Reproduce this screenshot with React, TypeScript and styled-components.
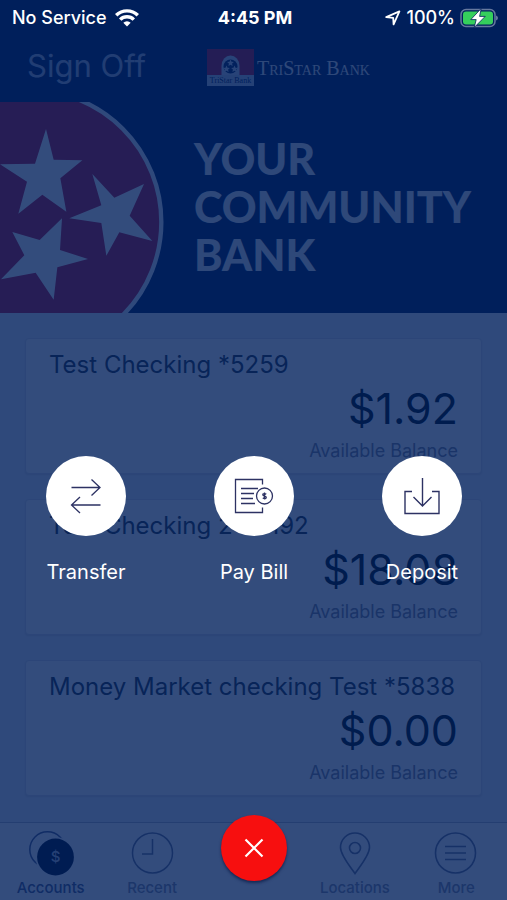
import React from "react";
import styled, { createGlobalStyle } from "styled-components";

const GlobalStyle = createGlobalStyle`
  *, *::before, *::after { box-sizing: border-box; }
  body {
    margin: 0;
    background: #001f5b;
    font-family: Inter, "Liberation Sans", sans-serif;
  }
  button { border: 0; background: none; padding: 0; margin: 0; font: inherit; color: inherit; cursor: pointer; }
  a { color: inherit; text-decoration: none; }
  h1, h2, p { margin: 0; }
  svg { display: block; flex: none; }
`;

const Screen = styled.div`
  position: relative;
  min-height: 100vh;
  display: flex;
  flex-direction: column;
  background: #ebeff8;
  overflow: hidden;
`;

const StatusBar = styled.div`
  position: relative;
  z-index: 2;
  display: grid;
  grid-template-columns: 1fr auto 1fr;
  align-items: center;
  height: 36px;
  padding: 0 9px 0 12px;
  background: #001f5b;
  color: #fff;
  font-size: 18px;
  font-weight: 500;
  line-height: 20px;
`;

const StatusGroup = styled.div<{ $end?: boolean }>`
  display: flex;
  align-items: center;
  gap: ${(p) => (p.$end ? 5 : 8)}px;
  justify-content: ${(p) => (p.$end ? "flex-end" : "flex-start")};
`;

const Clock = styled.time`
  font-weight: 700;
`;

const Header = styled.header`
  display: grid;
  grid-template-columns: 180px 1fr;
  align-items: center;
  height: 66px;
  padding: 0 27px 6px;
  background: #001f5b;
`;

const SignOff = styled.button`
  justify-self: start;
  color: #dfe6f8;
  font-size: 31px;
  line-height: 40px;
  opacity: 0.75;
`;

const Brand = styled.div`
  display: flex;
  align-items: center;
  gap: 3px;
  margin-top: 4px;
`;

const BrandName = styled.span`
  font-family: "Liberation Serif", serif;
  font-variant: small-caps;
  font-size: 20px;
  line-height: 24px;
  white-space: nowrap;
  color: #fff;
  opacity: 0.9;
`;

const Hero = styled.section`
  display: flex;
  align-items: center;
  gap: 25px;
  background: #001f5b;
`;

const Slogan = styled.h1`
  padding-bottom: 2px;
  color: #fff;
  opacity: 0.9;
  font-family: Lato, sans-serif;
  font-weight: 900;
  font-size: 43px;
  line-height: 48px;
`;

const AccountList = styled.main`
  flex: 1;
  display: flex;
  flex-direction: column;
  gap: 25px;
  padding: 25px;
`;

const Card = styled.article`
  display: flex;
  flex-direction: column;
  padding: 10px 23px 6px;
  border-radius: 4px;
  background: #fff;
  border: 1px solid #d9dde8;
  box-shadow: 0 1px 2px rgba(0, 0, 0, 0.1);
`;

const AccountName = styled.h2`
  color: #28384c;
  font-size: 24px;
  font-weight: 400;
  line-height: 32px;
  white-space: nowrap;
`;

const Amount = styled.p`
  align-self: flex-end;
  color: #00101c;
  font-size: 43px;
  line-height: 54px;
`;

const Caption = styled.p`
  align-self: flex-end;
  color: #82879a;
  font-size: 18px;
  line-height: 32px;
`;

const TabBar = styled.nav`
  display: grid;
  grid-template-columns: repeat(5, 1fr);
  height: 78px;
  background: #fdfdff;
  border-top: 1px solid #b4b9c8;
`;

const Tab = styled.a<{ $active?: boolean }>`
  display: flex;
  flex-direction: column;
  align-items: center;
  gap: 1px;
  padding-top: 8px;
  color: ${(p) => (p.$active ? "#50608c" : "#8c91a5")};
  font-size: 15px;
  font-weight: 500;
  line-height: 20px;
`;

const Scrim = styled.div`
  position: absolute;
  inset: 0;
  z-index: 1;
  display: flex;
  flex-direction: column;
  justify-content: flex-end;
  align-items: center;
  gap: 229px;
  padding-bottom: 19px;
  background: rgba(0, 31, 91, 0.8);
`;

const Actions = styled.div`
  align-self: stretch;
  display: flex;
  justify-content: space-between;
  padding: 0 45px 0 46px;
`;

const Action = styled.button`
  width: 80px;
  display: flex;
  flex-direction: column;
  align-items: center;
  gap: 22px;
  color: #fff;
  font-size: 20px;
  line-height: 28px;
  white-space: nowrap;
`;

const ActionDisc = styled.span`
  display: grid;
  place-items: center;
  width: 80px;
  height: 80px;
  border-radius: 50%;
  background: #fff;
`;

const CloseButton = styled.button`
  display: grid;
  place-items: center;
  width: 66px;
  height: 66px;
  border-radius: 50%;
  background: #f70f0f;
  box-shadow: 0 2px 3px rgba(0, 16, 60, 0.6);
`;

const WifiIcon = () => (
  <svg width="24" height="18" viewBox="0 0 24 18" fill="none" stroke="#fff" strokeWidth="3.4" aria-hidden="true">
    <path d="M1.2 6.3a15.3 15.3 0 0 1 21.6 0" />
    <path d="M5.2 10.6a9.6 9.6 0 0 1 13.6 0" />
    <path d="M12 17.5l-3.7-3.8a5.3 5.3 0 0 1 7.4 0z" fill="#fff" stroke="none" />
  </svg>
);

const LocationIcon = () => (
  <svg width="16" height="16" viewBox="0 0 16 16" fill="none" stroke="#fff" strokeWidth="1.8" strokeLinejoin="round" aria-hidden="true">
    <path d="M1.2 7.1L14.4 1.4L8.6 14.4L8.2 7.9z" />
  </svg>
);

const BatteryIcon = () => (
  <svg width="38" height="20" viewBox="0 0 38 20" aria-hidden="true">
    <rect x="1" y="1.5" width="34" height="17" rx="5" fill="none" stroke="#66799e" strokeWidth="1.5" />
    <rect x="3" y="3.5" width="30" height="13" rx="3" fill="#35cf5c" />
    <path d="M36 7.5q2 .8 2 2.5t-2 2.5z" fill="#66799e" />
    <path d="M21.2 .5L10.800 11.600h5.400L14.200 19.500L25.200 8.400h-5.600z" fill="#fff" stroke="#001f5b" strokeWidth="0.8" />
  </svg>
);

const BrandMark = () => (
  <svg width="47" height="38" viewBox="0 0 47 38" aria-hidden="true">
    <rect width="47" height="27" fill="#b4183e" />
    <path d="M14.500 27V17a9 10.500 0 0 1 18 0v10z" fill="#c6d3ea" />
    <circle cx="23.5" cy="17.5" r="7" fill="#0d2a63" />
    <g fill="#c6d3ea">
      <path id="mark-star" d="M23.5 10.600l1 2.200 2.400.2-1.800 1.600.5 2.300-2.100-1.200-2.100 1.200.5-2.300-1.800-1.600 2.400-.2z" />
      <use href="#mark-star" x="-4" y="6" />
      <use href="#mark-star" x="4" y="6" />
    </g>
    <rect y="26" width="47" height="11" fill="#b9c6df" />
    <text x="23.5" y="34" textAnchor="middle" fontFamily="Liberation Serif, serif" fontSize="8" fill="#001f5b">
      TriStar Bank
    </text>
  </svg>
);

const TriStarFlag = () => (
  <svg width="169" height="211" viewBox="0 21 507 633" aria-hidden="true">
    <circle cx="88" cy="381" r="396" fill="#be153d" stroke="#ebf0fb" strokeWidth="13" />
    <g fill="#fff">
      <path d="M138 102L161 194L247 196L181 250L199 350L127 299L55 356L81 260L0 208L105 206z" />
      <path d="M277 237L343 308L432 267L389 362L457 438L358 412L319 482L304 384L208 370L304 331z" />
      <path d="M186 370L180 465L264 492L172 517L161 614L107 533L3 553L73 481L37 411L119 435z" />
    </g>
  </svg>
);

const TransferIcon = () => (
  <svg width="32" height="36" viewBox="0 0 32 36" fill="none" stroke="#2d3263" strokeWidth="1.3" aria-hidden="true">
    <path d="M1.5 9.5H30M21.5 1.5l8.5 8-8.500 8M30.5 27H2M10 19L1.500 27l8.500 8" />
  </svg>
);

const BillIcon = () => (
  <svg width="40" height="36" viewBox="0 0 40 36" fill="none" stroke="#2d3263" strokeWidth="1.3" aria-hidden="true">
    <path d="M28.5 6.5V1.5H1.5v33h27v-5" />
    <path d="M7 10.5h17M7 15.5h13M7 20.5h12M7 25.5h14" />
    <circle cx="30.5" cy="18" r="8" />
    <path d="M32.300 16.200q-1.900-1-3.200-.3-1 1.400 1.400 2.100 2.400.8 1.500 2.100-1.500 1-3.200-.2M30.500 14.500v7" />
  </svg>
);

const DepositIcon = () => (
  <svg width="38" height="40" viewBox="0 0 38 40" fill="none" stroke="#2d3263" strokeWidth="1.4" aria-hidden="true">
    <path d="M9 15.5H2v22h34v-22h-7" />
    <path d="M19.5 2v28M10.500 21l9 9 9-9" />
  </svg>
);

const AccountsIcon = () => (
  <svg width="46" height="46" viewBox="0 0 46 46" fill="none" aria-hidden="true">
    <circle cx="19.5" cy="18.5" r="17.700" stroke="#50608c" strokeWidth="1.5" />
    <circle cx="27.5" cy="26" r="20" fill="#fdfdff" />
    <circle cx="27.5" cy="26" r="18.400" fill="#001030" />
    <text x="27.5" y="31" textAnchor="middle" fontFamily="Inter, sans-serif" fontSize="15" fill="#b9c2d8">$</text>
  </svg>
);

const RecentIcon = () => (
  <svg width="46" height="46" viewBox="0 0 46 46" fill="none" stroke="#6e7896" strokeWidth="1.5" aria-hidden="true">
    <circle cx="23.5" cy="22" r="20" />
    <path d="M23.5 8v15H13" />
  </svg>
);

const PinIcon = () => (
  <svg width="46" height="46" viewBox="0 0 46 46" fill="none" stroke="#6e7896" strokeWidth="1.6" aria-hidden="true">
    <path d="M23 42.500C17 34 8.500 24 8.500 16.500a14.500 14.500 0 0 1 29 0C37.500 24 29 34 23 42.500z" />
    <circle cx="23" cy="17" r="5.5" />
  </svg>
);

const MoreIcon = () => (
  <svg width="46" height="46" viewBox="0 0 46 46" fill="none" stroke="#6e7896" strokeWidth="1.6" aria-hidden="true">
    <circle cx="22.5" cy="22" r="20" />
    <path d="M12 15.5h21M12 22h21M12 28.500h21" />
  </svg>
);

const CloseIcon = () => (
  <svg width="20" height="20" viewBox="0 0 20 20" fill="none" stroke="#fff" strokeWidth="2.2" aria-hidden="true">
    <path d="M1.5 1.5l17 17M18.500 1.500l-17 17" />
  </svg>
);

const accounts = [
  { name: "Test Checking *5259", balance: "$1.92" },
  { name: "Test Checking 2 *5192", balance: "$18.08" },
  { name: "Money Market checking Test *5838", balance: "$0.00" },
];

const actions = [
  { label: "Transfer", Icon: TransferIcon },
  { label: "Pay Bill", Icon: BillIcon },
  { label: "Deposit", Icon: DepositIcon },
];

export default function App() {
  return (
    <>
      <GlobalStyle />
      <Screen>
        <StatusBar>
          <StatusGroup>
            <span>No Service</span>
            <WifiIcon />
          </StatusGroup>
          <Clock>4:45 PM</Clock>
          <StatusGroup $end>
            <LocationIcon />
            <span>100%</span>
            <BatteryIcon />
          </StatusGroup>
        </StatusBar>

        <Header>
          <SignOff type="button">Sign Off</SignOff>
          <Brand>
            <BrandMark />
            <BrandName>TriStar Bank</BrandName>
          </Brand>
        </Header>

        <Hero>
          <TriStarFlag />
          <Slogan>
            YOUR
            <br />
            COMMUNITY
            <br />
            BANK
          </Slogan>
        </Hero>

        <AccountList>
          {accounts.map((account) => (
            <Card key={account.name}>
              <AccountName>{account.name}</AccountName>
              <Amount>{account.balance}</Amount>
              <Caption>Available Balance</Caption>
            </Card>
          ))}
        </AccountList>

        <TabBar aria-label="Main">
          <Tab href="#accounts" $active aria-current="page">
            <AccountsIcon />
            Accounts
          </Tab>
          <Tab href="#recent">
            <RecentIcon />
            Recent
          </Tab>
          <span />
          <Tab href="#locations">
            <PinIcon />
            Locations
          </Tab>
          <Tab href="#more">
            <MoreIcon />
            More
          </Tab>
        </TabBar>

        <Scrim role="dialog" aria-label="Quick actions">
          <Actions>
            {actions.map(({ label, Icon }) => (
              <Action type="button" key={label}>
                <ActionDisc>
                  <Icon />
                </ActionDisc>
                {label}
              </Action>
            ))}
          </Actions>
          <CloseButton type="button" aria-label="Close">
            <CloseIcon />
          </CloseButton>
        </Scrim>
      </Screen>
    </>
  );
}
